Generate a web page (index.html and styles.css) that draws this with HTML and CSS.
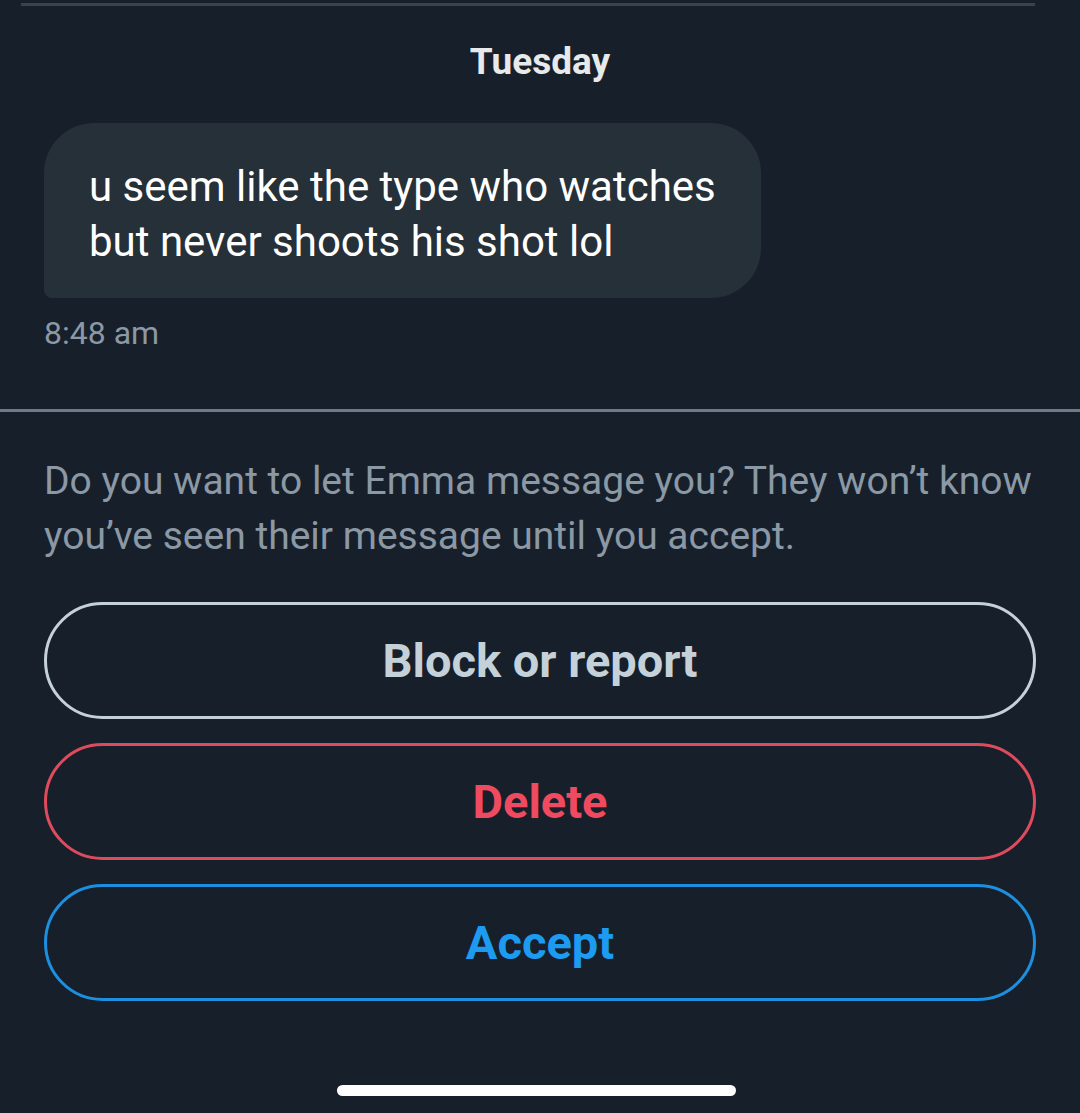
FILE: index.html
```html
<!DOCTYPE html>
<html lang="en">
<head>
  <meta charset="UTF-8">
  <title>Message request</title>
  <link rel="stylesheet" href="styles.css">
</head>
<body>
  <div class="top-rule"></div>

  <!-- Conversation -->
  <div class="day">Tuesday</div>

  <div class="thread">
    <div class="bubble">u seem like the type who watches<br>but never shoots his shot lol</div>
    <div class="time">8:48 am</div>
  </div>

  <!-- Request -->
  <div class="request">
    <p class="notice">Do you want to let Emma message you? They won’t know you’ve seen their message until you accept.</p>

    <div class="actions">
      <button class="btn btn-block">Block or report</button>
      <button class="btn btn-delete">Delete</button>
      <button class="btn btn-accept">Accept</button>
    </div>
  </div>

  <div class="home-bar"></div>
</body>
</html>
```

FILE: styles.css
```css
html, body {
  margin: 0;
  padding: 0;
}

body {
  background: #17202a;
  font-family: Roboto, "Noto Sans", sans-serif;
  width: 1080px;
  height: 1113px;
  overflow: hidden;
}

.top-rule {
  height: 3px;
  margin: 3px 45px 0 21px;
  background: #38444d;
}

.day {
  text-align: center;
  color: #e7e9ea;
  font-weight: bold;
  font-size: 37px;
  margin-top: 36px;
  line-height: 40px;
}

.thread {
  padding: 0 44px;
  margin-top: 41px;
}

.bubble {
  display: inline-block;
  background: #253039;
  color: #ffffff;
  font-size: 42px;
  line-height: 55px;
  padding: 36px 45px 29px 45px;
  border-radius: 50px 50px 50px 8px;
}

.time {
  color: #8b98a5;
  font-size: 32px;
  margin-top: 16px;
  line-height: 38px;
}

.request {
  border-top: 3px solid #6e7b86;
  margin-top: 57px;
  padding: 0 44px;
}

.notice {
  color: #8b98a5;
  font-size: 39px;
  line-height: 55px;
  margin: 42px 0 38px;
}

.actions {
  display: flex;
  flex-direction: column;
  gap: 24px;
}

.btn {
  height: 117px;
  width: 100%;
  background: transparent;
  border: 3px solid;
  border-radius: 60px;
  font-family: Roboto, "Noto Sans", sans-serif;
  font-weight: bold;
  font-size: 47px;
}

.btn-block {
  border-color: #c5d1d9;
  color: #c5d1d9;
}

.btn-delete {
  border-color: #dd4b5d;
  color: #ef4a5f;
}

.btn-accept {
  border-color: #1d8fe0;
  color: #1d9bf0;
}

.home-bar {
  width: 399px;
  height: 11px;
  background: #ffffff;
  border-radius: 6px;
  margin: 84px 0 0 337px;
}
```
